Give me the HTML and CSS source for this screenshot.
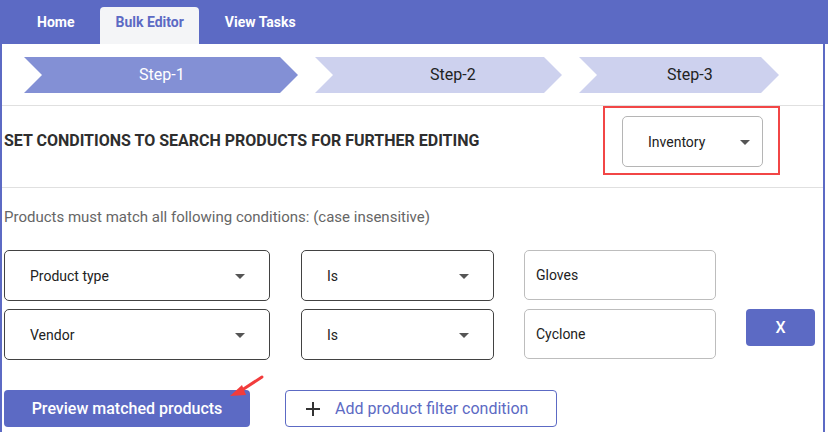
FILE: index.html
```html
<!DOCTYPE html>
<html>
<head>
<meta charset="utf-8">
<link rel="stylesheet" href="styles.css">
</head>
<body>
<div class="app">
  <div class="header">
    <div class="tab">Home</div>
    <div class="tab tab-active">Bulk Editor</div>
    <div class="tab">View Tasks</div>
  </div>
  <div class="steps">
    <div class="step step-1">Step-1</div>
    <div class="step step-2">Step-2</div>
    <div class="step step-3">Step-3</div>
  </div>
  <div class="title-section">
    <div class="title">SET CONDITIONS TO SEARCH PRODUCTS FOR FURTHER EDITING</div>
    <div class="highlight">
      <div class="select select-inv"><span>Inventory</span><i class="caret"></i></div>
    </div>
  </div>
  <div class="content">
    <div class="note">Products must match all following conditions: (case insensitive)</div>
    <div class="conditions">
      <div class="select select-field"><span>Product type</span><i class="caret"></i></div>
      <div class="select select-op"><span>Is</span><i class="caret"></i></div>
      <div class="input">Gloves</div>
      <div class="spacer"></div>
      <div class="select select-field"><span>Vendor</span><i class="caret"></i></div>
      <div class="select select-op"><span>Is</span><i class="caret"></i></div>
      <div class="input">Cyclone</div>
      <div class="remove">X</div>
    </div>
    <div class="actions">
      <div class="btn-primary">Preview matched products</div>
      <div class="btn-outline">
        <svg class="plus" width="14" height="14" viewBox="0 0 14 14"><path d="M7 0v14M0 7h14" stroke="#333" stroke-width="2" fill="none"/></svg>
        <span>Add product filter condition</span>
      </div>
    </div>
  </div>
  <svg class="pointer" width="40" height="28" viewBox="0 0 40 28">
    <path d="M33 2 L10 17" stroke="#f23c3c" stroke-width="3" stroke-linecap="round" fill="none"/>
    <path d="M1 21 L13 10 L17 20 Z" fill="#f23c3c"/>
  </svg>
</div>
</body>
</html>
```

FILE: styles.css
```css
* { box-sizing: border-box; }
html, body { margin: 0; padding: 0; background: #fff; }
body { font-family: Roboto, "Liberation Sans", Arial, sans-serif; }

.app {
  position: relative;
  width: 825px;
  min-height: 432px;
  border-left: 2px solid #5c6ac4;
  border-right: 2px solid #5c6ac4;
}

.header {
  height: 44px;
  margin-right: -5px;
  background: #5c6ac4;
  display: flex;
  align-items: flex-end;
  padding-left: 20px;
  gap: 11px;
}
.tab {
  font-size: 14px;
  font-weight: 700;
  line-height: 20px;
  padding: 5px 15px 12px;
  color: #fff;
  border-radius: 4px 4px 0 0;
}
.tab-active {
  background: #f4f5f7;
  color: #5c6ac4;
}

.steps {
  margin-top: 13px;
  padding-left: 22px;
  display: flex;
  gap: 17px;
  height: 36px;
}
.step {
  height: 36px;
  line-height: 36px;
  font-size: 16px;
  color: #222;
  background: #cdd1ee;
  clip-path: polygon(0 0, calc(100% - 18px) 0, 100% 50%, calc(100% - 18px) 100%, 0 100%, 18px 50%);
}
.step-1 { width: 274px; background: #8390d5; color: #fff; padding-left: 115px; }
.step-2 { width: 247px; padding-left: 115px; }
.step-3 { width: 200px; padding-left: 88px; }

.title-section {
  margin-top: 12px;
  border-top: 1px solid #e0e0e0;
  border-bottom: 1px solid #e0e0e0;
  padding: 0 43px 12px 2px;
  display: flex;
  align-items: center;
  justify-content: space-between;
}
.title {
  font-size: 16px;
  font-weight: 700;
  color: #2e2e2e;
}
.highlight {
  border: 2px solid #f24646;
  padding: 8px 15px 6px 17px;
}

.select {
  position: relative;
  display: flex;
  align-items: center;
  border: 1px solid #424242;
  border-radius: 5px;
  font-size: 14px;
  color: #222;
}
.caret {
  position: absolute;
  top: 50%;
  margin-top: -2px;
  width: 0;
  height: 0;
  border-left: 5px solid transparent;
  border-right: 5px solid transparent;
  border-top: 5px solid #555;
}
.select-inv {
  width: 141px;
  height: 51px;
  border-color: #b5b5b5;
  padding-left: 25px;
}
.select-inv .caret { right: 12px; }

.content { padding: 0 2px; }
.note {
  margin-top: 19px;
  font-size: 15px;
  line-height: 20px;
  color: #666;
}
.conditions {
  margin-top: 23px;
  display: grid;
  grid-template-columns: 297px 223px 222px 69px;
  grid-auto-rows: 51px;
  row-gap: 8px;
}
.select-field { width: 266px; padding-left: 25px; }
.select-field .caret { right: 24px; }
.select-op { width: 193px; padding-left: 25px; }
.select-op .caret { right: 24px; }
.input {
  width: 192px;
  height: 50px;
  display: flex;
  align-items: center;
  border: 1px solid #bdbdbd;
  border-radius: 5px;
  font-size: 14px;
  color: #222;
  padding-left: 11px;
}
.remove {
  align-self: start;
  height: 37px;
  background: #5c6ac4;
  color: #fff;
  border-radius: 4px;
  display: flex;
  align-items: center;
  justify-content: center;
  font-size: 16px;
  font-weight: 500;
}

.actions {
  margin-top: 30px;
  display: flex;
  gap: 35px;
}
.btn-primary {
  width: 246px;
  height: 37px;
  background: #5c6ac4;
  color: #fff;
  border-radius: 4px;
  font-size: 16px;
  font-weight: 500;
  display: flex;
  align-items: center;
  justify-content: center;
}
.btn-outline {
  width: 272px;
  height: 37px;
  border: 1px solid #5c6ac4;
  border-radius: 4px;
  color: #5c6ac4;
  font-size: 16px;
  display: flex;
  align-items: center;
  padding-left: 20px;
  gap: 15px;
}
.plus { flex: none; }

.pointer {
  position: absolute;
  left: 227px;
  top: 375px;
}
```
